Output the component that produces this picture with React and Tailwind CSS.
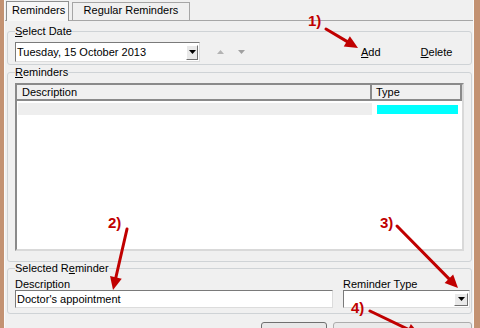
import React from "react";

function arrow(x1, y1, x2, y2, len = 13, half = 6) {
  const dx = x2 - x1, dy = y2 - y1;
  const d = Math.hypot(dx, dy);
  const ux = dx / d, uy = dy / d;
  const bx = x2 - ux * len, by = y2 - uy * len;
  const px = -uy, py = ux;
  return {
    line: [x1, y1, bx + ux * 2, by + uy * 2],
    poly: `${x2},${y2} ${bx + px * half},${by + py * half} ${bx - px * half},${by - py * half}`,
  };
}

const ARROWS = [
  arrow(326, 29, 358, 48),
  arrow(127, 229, 113, 290),
  arrow(397, 226, 458, 288),
  arrow(370, 311, 420, 335),
];

function DropBtn({ className = "" }) {
  return (
    <div className={"flex items-center justify-center bg-[#e9e9e9] border border-t-[#ffffff] border-l-[#ffffff] border-r-[#707070] border-b-[#707070] " + className}>
      <svg width="7" height="4" viewBox="0 0 7 4"><polygon points="0,0 7,0 3.5,4" fill="#000" /></svg>
    </div>
  );
}

export default function App() {
  return (
    <div className="relative w-[480px] h-[328px] overflow-hidden flex bg-[#c39272] text-black text-[11px] leading-[13px] font-['Liberation_Sans',Arial,sans-serif]">
      <div className="w-[4px] shrink-0" />
      <div className="w-[470px] shrink-0 bg-[#f0f0f0] border-l border-r border-l-[#fafafa] border-r-[#fafafa] flex flex-col">
        {/* tab strip */}
        <div className="h-[21px] flex items-end border-b border-[#a6a6a6] shrink-0">
          <div className="ml-[1px] w-[63px] h-[20px] mb-[-1px] relative z-10 bg-[#f7f7f7] border border-b-0 border-[#8e8f8f] pl-[5px] pt-[2px]">
            Reminders
          </div>
          <div className="ml-[3px] w-[118px] h-[18px] bg-[#f0f0f0] border border-b-0 border-[#a6a6a6] flex justify-center pt-[1px]">
            Regular Reminders
          </div>
        </div>
        {/* tab page */}
        <div className="flex-1 flex flex-col">
          <fieldset className="ml-[2px] mr-[1px] mt-[4px] border border-[#cfd3d6] rounded-[3px] pl-[7px] pr-[7px] pb-[2px]">
            <legend className="px-0 leading-[13px]"><span className="underline">S</span>elect Date</legend>
            <div className="mt-[4px] flex items-center h-[20px]">
              <div className="w-[185px] h-[20px] bg-white border border-t-[#7a7a7a] border-l-[#7a7a7a] border-r-[#dcdcdc] border-b-[#dcdcdc] flex items-center pl-[1px] pr-[1px]">
                <span className="flex-1">Tuesday, 15 October 2013</span>
                <DropBtn className="w-[12px] h-[15px]" />
              </div>
              <svg className="ml-[17px]" width="7" height="4" viewBox="0 0 7 4"><polygon points="3.5,0 7,4 0,4" fill="#b3b3b3" /></svg>
              <svg className="ml-[14px]" width="7" height="4" viewBox="0 0 7 4"><polygon points="0,0 7,0 3.5,4" fill="#a0a0a0" /></svg>
              <span className="ml-[116px]"><span className="underline">A</span>dd</span>
              <span className="ml-[40px]"><span className="underline">D</span>elete</span>
            </div>
          </fieldset>

          <fieldset className="ml-[2px] mr-[1px] mt-[1px] border border-[#cfd3d6] rounded-[3px] pl-[7px] pr-[7px] pb-[10px]">
            <legend className="px-0 leading-[13px]"><span className="underline">R</span>eminders</legend>
            <div className="mt-[4px] h-[168px] bg-white border-2 border-t-[#8a8a8a] border-l-[#8a8a8a] border-r-[#d9d9d9] border-b-[#d9d9d9] flex flex-col">
              <div className="h-[16px] flex bg-[#f0f0f0] border-b-2 border-[#8a8a8a]">
                <div className="w-[355px] pl-[5px] leading-[14px] border-r-2 border-[#8a8a8a]">Description</div>
                <div className="flex-1 pl-[4px] leading-[14px] border-r-2 border-[#8a8a8a]">Type</div>
              </div>
              <div className="mt-[2px] h-[12px] flex items-center">
                <div className="ml-[1px] w-[354px] h-[12px] bg-[#eeeeee]" />
                <div className="ml-[5px] w-[81px] h-[9px] bg-[#00ffff]" />
              </div>
            </div>
          </fieldset>

          <fieldset className="ml-[2px] mr-[1px] border border-[#cfd3d6] rounded-[3px] pl-[7px] pr-[1px] pb-[5px]">
            <legend className="px-0 leading-[13px]">Selected R<span className="underline">e</span>minder</legend>
            <div className="mt-[3px] flex">
              <div className="flex flex-col w-[318px]">
                <div className="h-[12px] leading-[12px]">Description</div>
                <div className="h-[18px] bg-white border border-t-[#7a7a7a] border-l-[#7a7a7a] border-r-[#dcdcdc] border-b-[#dcdcdc] pl-[1px] leading-[16px]">
                  Doctor's appointment
                </div>
              </div>
              <div className="ml-[10px] flex flex-col w-[127px]">
                <div className="h-[12px] leading-[12px]">Reminder Type</div>
                <div className="h-[18px] bg-white border border-t-[#7a7a7a] border-l-[#7a7a7a] border-r-[#dcdcdc] border-b-[#dcdcdc] flex items-center justify-end pr-[1px]">
                  <DropBtn className="w-[14px] h-[13px]" />
                </div>
              </div>
            </div>
          </fieldset>

          <div className="mt-[8px] flex justify-end gap-[6px] mr-[1px]">
            <div className="w-[66px] h-[22px] border border-[#707070] rounded-[3px] bg-[#e8e8e8]" />
            <div className="w-[139px] h-[22px] border border-[#adadad] rounded-[3px] bg-[#eaeaea]" />
          </div>
        </div>
      </div>
      <div className="flex-1" />

      <svg className="absolute inset-0 pointer-events-none" width="480" height="328" viewBox="0 0 480 328">
        {ARROWS.map((a, i) => (
          <g key={i}>
            <line x1={a.line[0]} y1={a.line[1]} x2={a.line[2]} y2={a.line[3]} stroke="#c00000" strokeWidth="3" strokeLinecap="round" />
            <polygon points={a.poly} fill="#c00000" />
          </g>
        ))}
      </svg>
      <div className="absolute left-[308px] top-[13px] text-[15px] leading-none font-bold text-[#c00000]">1)</div>
      <div className="absolute left-[108px] top-[215px] text-[15px] leading-none font-bold text-[#c00000]">2)</div>
      <div className="absolute left-[380px] top-[215px] text-[15px] leading-none font-bold text-[#c00000]">3)</div>
      <div className="absolute left-[351px] top-[300px] text-[15px] leading-none font-bold text-[#c00000]">4)</div>
    </div>
  );
}
